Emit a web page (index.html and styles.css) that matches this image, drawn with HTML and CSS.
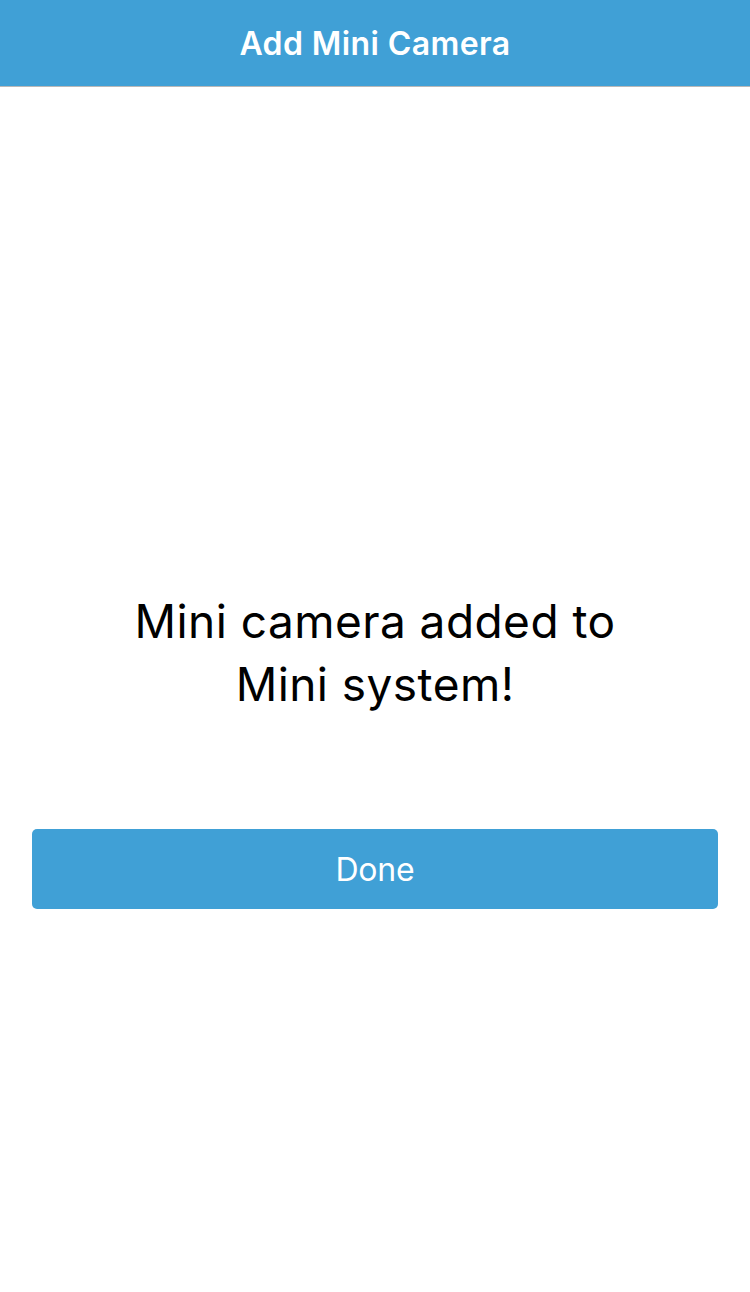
FILE: index.html
```html
<!DOCTYPE html>
<html lang="en">
<head>
<meta charset="utf-8">
<title>Add Mini Camera</title>
<link rel="stylesheet" href="styles.css">
</head>
<body>
<header class="header">
  <h1 class="title">Add Mini Camera</h1>
</header>
<main class="main">
  <p class="message">Mini camera added to<br>Mini system!</p>
  <button class="done" type="button">Done</button>
</main>
</body>
</html>
```

FILE: styles.css
```css
html, body {
  margin: 0;
  padding: 0;
  background: #ffffff;
  font-family: Inter, "Noto Sans", "Liberation Sans", sans-serif;
}
.header {
  height: 86px;
  background: #40a0d6;
  border-bottom: 1px solid #b8b8b8;
  display: flex;
  align-items: center;
  justify-content: center;
}
.title {
  margin: 0;
  color: #ffffff;
  font-size: 32px;
  font-weight: 600;
  letter-spacing: 0.4px;
}
.main {
  display: flex;
  flex-direction: column;
  padding: 503px 32px 0;
}
.message {
  margin: 0;
  text-align: center;
  color: #000000;
  font-size: 46px;
  line-height: 63px;
  letter-spacing: 0.45px;
}
.done {
  margin-top: 113px;
  height: 80px;
  border: none;
  border-radius: 5px;
  background: #40a0d6;
  color: #ffffff;
  font-family: inherit;
  font-size: 32px;
  font-weight: 400;
  letter-spacing: -0.2px;
}
```
